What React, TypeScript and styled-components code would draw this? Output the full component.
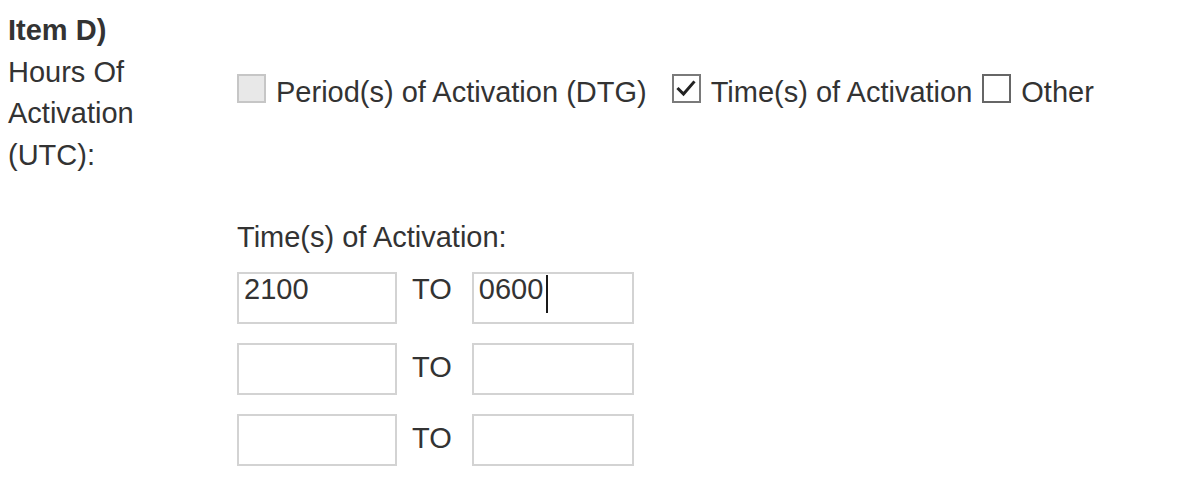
import React from "react";
import styled, { createGlobalStyle } from "styled-components";

const GlobalStyle = createGlobalStyle`
  html, body {
    margin: 0;
    background: #ffffff;
  }
  body {
    padding: 8px;
    font-family: "Liberation Sans", Arial, sans-serif;
    font-size: 29px;
    line-height: 41.5px;
    color: #333333;
  }
`;

const Form = styled.div`
  display: grid;
  grid-template-columns: 229px auto;
  align-items: start;
`;

const FieldLabel = styled.div`
  padding-top: 2px;
  color: #333333;
`;

const ItemTitle = styled.div`
  font-weight: bold;
  color: #333333;
`;

const Options = styled.div`
  align-self: center;
  display: flex;
  align-items: center;
  padding-top: 2px;
  white-space: nowrap;
`;

const Option = styled.label<{ $spaced?: boolean }>`
  display: flex;
  align-items: center;
  gap: 10px;
  margin-right: ${(p) => (p.$spaced ? "25px" : "10px")};
  cursor: default;
`;

const Box = styled.span<{ $state: "disabled" | "checked" | "empty" }>`
  box-sizing: border-box;
  width: 29px;
  height: 29px;
  margin-bottom: 9px;
  display: inline-flex;
  align-items: center;
  justify-content: center;
  border: 2px solid
    ${(p) =>
      p.$state === "disabled" ? "#c6c6c6" : p.$state === "checked" ? "#7a7a7a" : "#666666"};
  background: ${(p) => (p.$state === "disabled" ? "#e8e8e8" : "#ffffff")};
`;

const Spacer = styled.div``;

const TimesSection = styled.div`
  margin-top: 41px;
`;

const Caption = styled.div`
  color: #333333;
`;

const Rows = styled.div`
  margin-top: 13px;
  display: flex;
  flex-direction: column;
  gap: 19px;
`;

const Row = styled.div`
  display: flex;
  align-items: flex-start;
  height: 52px;
`;

const Field = styled.div`
  position: relative;
  display: flex;
`;

const TimeInput = styled.input<{ $wide?: boolean }>`
  box-sizing: border-box;
  display: block;
  width: ${(p) => (p.$wide ? "162px" : "160px")};
  height: 52px;
  margin: 0;
  padding: 0 5px 16px 5px;
  border: 2px solid #d3d3d3;
  border-radius: 0;
  outline: none;
  background: #ffffff;
  font-family: "Liberation Sans", Arial, sans-serif;
  font-size: 29px;
  color: #333333;
  caret-color: transparent;
`;

const Caret = styled.span`
  position: absolute;
  left: 74px;
  top: 3px;
  width: 2px;
  height: 38px;
  background: #1a1a1a;
`;

const To = styled.span<{ $filled?: boolean }>`
  line-height: normal;
  padding-top: ${(p) => (p.$filled ? "1px" : "8px")};
  margin: 0 20px 0 15px;
  color: #333333;
`;

const Check = () => (
  <svg width="22" height="22" viewBox="0 0 22 22" aria-hidden="true">
    <path d="M3.5 11 L8.5 16 L18.5 4.5" fill="none" stroke="#222" strokeWidth="3" strokeLinecap="square" strokeLinejoin="miter" />
  </svg>
);

const rows = [
  { from: "2100", to: "0600", active: true },
  { from: "", to: "", active: false },
  { from: "", to: "", active: false },
];

export default function App() {
  return (
    <>
      <GlobalStyle />
      <Form>
        <FieldLabel>
          <ItemTitle>Item D)</ItemTitle>
          Hours Of
          <br />
          Activation
          <br />
          (UTC):
        </FieldLabel>
        <Options>
          <Option $spaced>
            <Box $state="disabled" />
            Period(s) of Activation (DTG)
          </Option>
          <Option>
            <Box $state="checked">
              <Check />
            </Box>
            Time(s) of Activation
          </Option>
          <Option>
            <Box $state="empty" />
            Other
          </Option>
        </Options>
        <Spacer />
        <TimesSection>
          <Caption>Time(s) of Activation:</Caption>
          <Rows>
            {rows.map((r, i) => (
              <Row key={i}>
                <Field>
                  <TimeInput readOnly value={r.from} />
                </Field>
                <To $filled={r.from !== ""}>TO</To>
                <Field>
                  <TimeInput $wide readOnly value={r.to} />
                  {r.active && <Caret />}
                </Field>
              </Row>
            ))}
          </Rows>
        </TimesSection>
      </Form>
    </>
  );
}
